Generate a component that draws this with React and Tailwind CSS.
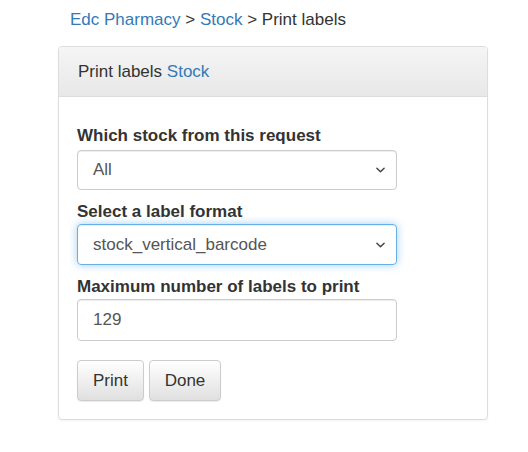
const Chevron = () => (
  <svg viewBox="0 0 10 6" className="absolute right-[11px] top-1/2 -translate-y-1/2 w-[9px] h-[6px]" fill="none">
    <path d="M1 1l4 4 4-4" stroke="#444" strokeWidth="1.6" strokeLinecap="round" strokeLinejoin="round" />
  </svg>
);

export default function App() {
  const font = { fontFamily: '"Liberation Sans", Arial, sans-serif' };
  return (
    <div className="w-[528px] h-[452px] bg-white text-[#333] text-[17px]" style={font}>
      {/* breadcrumb */}
      <div className="pt-[9px] pl-[70px] h-[46px] leading-[22px]">
        <a href="#" className="text-[#337ab7]">Edc Pharmacy</a>
        <span> &gt; </span>
        <a href="#" className="text-[#337ab7]">Stock</a>
        <span> &gt; Print labels</span>
      </div>

      {/* panel */}
      <div className="ml-[58px] w-[430px] border border-[#ddd] rounded-[4px] shadow-[0_1px_2px_rgba(0,0,0,0.05)] bg-white">
        <div className="h-[50px] flex items-center pl-[19px] pt-[1px] border-b border-[#ddd] rounded-t-[3px] bg-gradient-to-b from-[#f5f5f5] to-[#e8e8e8]">
          <span>Print labels <a href="#" className="text-[#337ab7]">Stock</a></span>
        </div>

        <div className="pt-[28px] pl-[18px] pb-[18px]">
          <div className="font-bold leading-[22px] h-[22px]">Which stock from this request</div>
          <div className="relative mt-[3px] w-[320px] h-[40px] border border-[#ccc] rounded-[4px] shadow-[inset_0_1px_1px_rgba(0,0,0,0.075)] flex items-center pl-[15px] text-[#555]">
            All
            <Chevron />
          </div>

          <div className="mt-[11px] font-bold leading-[22px] h-[22px]">Select a label format</div>
          <div className="relative mt-[1px] w-[320px] h-[41px] border border-[#66afe9] rounded-[4px] shadow-[inset_0_1px_1px_rgba(0,0,0,0.075),0_0_8px_rgba(102,175,233,0.6)] flex items-center pl-[15px] text-[#555]">
            stock_vertical_barcode
            <Chevron />
          </div>

          <div className="mt-[11px] font-bold leading-[22px] h-[22px]">Maximum number of labels to print</div>
          <div className="mt-[1px] w-[320px] h-[42px] border border-[#ccc] rounded-[4px] shadow-[inset_0_1px_1px_rgba(0,0,0,0.075)] flex items-center pl-[15px] text-[#555]">
            129
          </div>

          <div className="mt-[19px] flex gap-[5px]">
            <button className="h-[41px] w-[67px] border border-[#ccc] rounded-[4px] bg-gradient-to-b from-white to-[#e0e0e0] shadow-[0_1px_1px_rgba(0,0,0,0.08)] text-[#333]">Print</button>
            <button className="h-[41px] w-[72px] border border-[#ccc] rounded-[4px] bg-gradient-to-b from-white to-[#e0e0e0] shadow-[0_1px_1px_rgba(0,0,0,0.08)] text-[#333]">Done</button>
          </div>
        </div>
      </div>
    </div>
  );
}
